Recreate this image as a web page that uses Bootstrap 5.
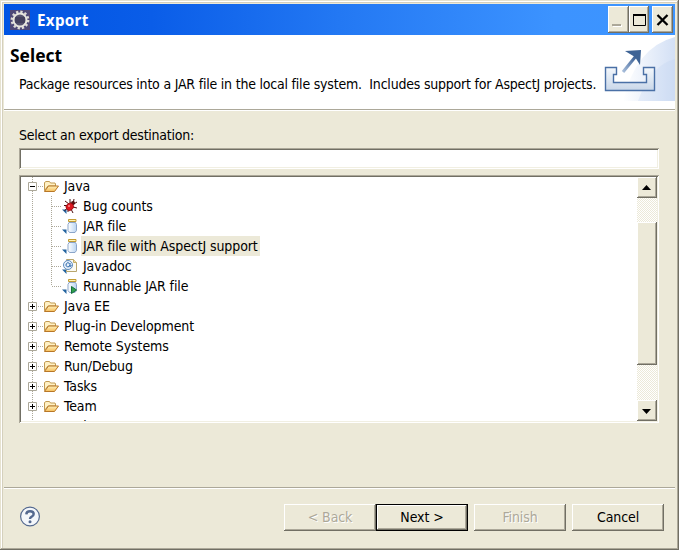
<!DOCTYPE html>
<html lang="en">
<head>
<meta charset="utf-8">
<meta name="viewport" content="width=device-width, initial-scale=1">
<title>Export</title>
<link href="https://cdn.jsdelivr.net/npm/bootstrap@5.3.0/dist/css/bootstrap.min.css" rel="stylesheet">
<style>
:root{--face:#ece9d8;--sh:#aca899;--dk:#716f64}
body{font-family:"DejaVu Sans Condensed","DejaVu Sans","Noto Sans",sans-serif;font-stretch:condensed;font-size:14px;line-height:20px;color:#000;background:var(--face);letter-spacing:-.1px;overflow:hidden}
svg{display:block;flex:none}
.window{width:679px;height:550px;background:var(--face);padding:4px;box-shadow:inset -1px -1px var(--dk),inset 1px 1px #e6e2cf,inset -2px -2px var(--sh),inset 2px 2px #fff,inset 3px 3px #d5d0bd}
.titlebar{height:31px;background:linear-gradient(90deg,#0054e3,#0a5de8 22%,#2378f3 50%,#3c93ff 82%,#3d95ff);padding:0 2px 0 6px}
.title-text{color:#fff;font-family:"Noto Sans",sans-serif;font-weight:700;font-size:15.2px;letter-spacing:.3px;margin-left:7px}
.raised{background:var(--face);box-shadow:inset -1px -1px var(--dk),inset 1px 1px #fff,inset -2px -2px var(--sh)}
.capbtn{width:21px;height:27px;border:0;padding:0}
.capbtn.maxi{width:20px}
.capbtn.closer{margin-left:3px}
.banner{height:74px;background:#fff;padding-left:6px}
.banner h1{font-family:"Noto Sans",sans-serif;font-weight:700;font-size:17.4px;line-height:22px;letter-spacing:0;margin:9px 0 0}
.banner-art{width:79px;height:66px}
.desc{margin:8px 0 0 9px;white-space:pre;letter-spacing:-.21px}
.rule{height:2px;background:#fff;border-top:1px solid var(--sh);flex:none}
.sunken{background:#fff;border:0;border-radius:0;box-shadow:inset 1px 1px var(--sh),inset -1px -1px #fff,inset 2px 2px var(--dk),inset -2px -2px #f1efe2}
.pane{padding:14px 0 0 15px;height:376px}
.pane label{letter-spacing:-.25px}
.filter{height:21px;width:640px;margin-top:3px;padding:2px 4px;outline:0}
.tree{height:248px;width:640px;margin-top:6px;padding:2px}
.rows{overflow:hidden;padding-left:7px;background:repeating-linear-gradient(180deg,#aca899 0 1px,transparent 1px 2px) 11px 0/1px 100% no-repeat}
.rows ul{list-style:none;margin:0;padding:0}
.rows .root{margin-top:-1px}
.node{height:20px}
.rows .kids{margin-left:23px;background:repeating-linear-gradient(180deg,#aca899 0 1px,transparent 1px 2px) 0 0/1px 90px no-repeat}
.hdots{height:1px;width:6px;flex:none;background:repeating-linear-gradient(90deg,transparent 0 1px,#aca899 1px 2px)}
.kids .hdots{width:11px}
.lbl{padding:0 2px;margin-left:3px;white-space:pre}
.picked{background:var(--face)}
.track{width:20px;background:conic-gradient(#fff 25%,#ece9d8 0 50%,#fff 0 75%,#ece9d8 0) 0 0/2px 2px}
.arrow{height:21px;border:0;padding:0}
.thumb{height:143px;margin-top:24px}
.footer-bar{padding:15px 11px 0 15px}
.help{margin-top:2px}
.wbtn{width:92px;height:27px;border:0;padding:0;line-height:25px;color:#000;letter-spacing:-.1px}
.wbtn.off{color:#aca899;text-shadow:1px 1px #fff}
.wbtn.apart{margin-left:6px}
.dflt{box-shadow:inset 0 0 0 1px #000,inset -2px -2px var(--dk),inset 2px 2px #fff,inset -3px -3px var(--sh)}
</style>
</head>
<body>
<svg width="0" height="0" class="position-absolute">
<defs>
<linearGradient id="fg" x2="0" y2="1"><stop stop-color="#fff2bd"/><stop offset="1" stop-color="#f5bd58"/></linearGradient>
<linearGradient id="jg" x2="1"><stop stop-color="#fff"/><stop offset="1" stop-color="#b9d4f2"/></linearGradient>
<symbol id="folder" viewBox="0 0 16 16"><path d="M1.500 12.500V4.500L3 3.500h3.500l1 1.500h4.500l.5 1v2H5z" fill="#fff1c4" stroke="#c19a52"/><path d="M1.500 13.500l4-5.500h10L11.500 13.500z" fill="url(#fg)" stroke="#b87727" stroke-linejoin="round"/></symbol>
<symbol id="corner" viewBox="0 0 16 16"><path d="M0 11.500h4.500V16z" fill="#23639f"/></symbol>
<symbol id="jar" viewBox="0 0 16 16"><use href="#corner"/><path d="M7 4.500h6.500l1 2v6l-1.500 2H7.500L6 12.500v-6z" fill="url(#jg)" stroke="#8ba5c9"/><path d="M6.500 1.500h7.500v2H6.500z" fill="#fff3b8" stroke="#c39d33"/></symbol>
<symbol id="bug" viewBox="0 0 16 16"><use href="#corner"/><path d="M3 3l4 3M2 7.500h4M2.500 12.500l4-3M8 1v4l3 1 1-5M10 7l5-3M11 9l4 1M9 11l2 4M6 11v3" fill="none" stroke="#4b0d0d"/><circle cx="11" cy="5" r="2" fill="#571010"/><ellipse cx="7.800" cy="8.800" rx="3.900" ry="3.500" transform="rotate(-40 7.800 8.800)" fill="#dc1820" stroke="#93090f" stroke-width=".7"/><circle cx="7" cy="8" r="1" fill="#ff8d8d"/></symbol>
<symbol id="doc" viewBox="0 0 16 16"><use href="#corner"/><path d="M4.500 1.500h7l3 3v9h-10z" fill="#fbfaf2" stroke="#b8a56c"/><path d="M11.500 1.500v3h3" fill="#f3dfa3" stroke="#c4ad68"/><circle cx="6" cy="7" r="4.500" fill="#e5effa" stroke="#5d8cc0"/><path d="M8 5v3q1 1 1.500-.5M8 7a2 2 0 1 1-.5-1.500" fill="none" stroke="#2d68aa"/></symbol>
<symbol id="twig" viewBox="0 0 9 9"><path d="M.5.5h8v8h-8z" fill="#fff" stroke="#aca899"/><path d="M2 4.500h5" stroke="#000"/></symbol>
<symbol id="twigplus" viewBox="0 0 9 9"><use href="#twig"/><path d="M4.500 2v5" stroke="#000"/></symbol>
</defs>
</svg>
<main class="window d-flex flex-column">
 <header class="titlebar d-flex align-items-center">
  <svg width="20" height="20" viewBox="0 0 20 20"><path fill="#4d4778" d="M0 0h20v20H0z"/><circle cx="10" cy="10" r="8.200" fill="none" stroke="#dedbd6" stroke-width="2.400" stroke-dasharray="2.300 2"/><circle cx="10" cy="10" r="6.500" fill="#55516e" stroke="#e8e5df" stroke-width="2"/><path d="M5 8h10M5 10h10M5 12h10" stroke="#34304e"/></svg>
  <span class="title-text">Export</span>
  <div class="d-flex ms-auto">
   <button class="capbtn raised" aria-label="Minimize"><svg width="21" height="27"><path d="M5 20h9" stroke="#fff" stroke-width="2"/><path d="M4 19h9" stroke="#aca899" stroke-width="2"/></svg></button>
   <button class="capbtn maxi raised" aria-label="Maximize"><svg width="20" height="27"><path d="M4.500 9v10.500h12V9" fill="none" stroke="#000"/><path d="M4 9h13" stroke="#000" stroke-width="2"/></svg></button>
   <button class="capbtn closer raised" aria-label="Close"><svg width="21" height="27"><path d="M5.500 9l10 10M15.500 9l-10 10" stroke="#000" stroke-width="2.300"/></svg></button>
  </div>
 </header>
 <section class="banner d-flex justify-content-between">
  <div><h1>Select</h1><p class="desc">Package resources into a JAR file in the local file system.  Includes support for AspectJ projects.</p></div>
  <svg class="banner-art" viewBox="0 0 79 66"><defs><linearGradient id="bg" x2="1"><stop stop-color="#fff"/><stop offset="1" stop-color="#d3e0f5"/></linearGradient><linearGradient id="tg" x2="0" y2="1"><stop stop-color="#f4f8fc"/><stop offset="1" stop-color="#c9d7e9"/></linearGradient><linearGradient id="ag" x1="1" y1="0" x2="0" y2="1"><stop stop-color="#355b91"/><stop offset="1" stop-color="#a9bfdc"/></linearGradient></defs><path d="M79 2Q40 12 27 66H79z" fill="url(#bg)"/><path d="M79 24Q55 30 42 66H79z" fill="#bdd0ee" opacity=".25"/><path d="M9.500 32.500h11v7h-3v8h33v-8h-3v-7h11v23h-49z" fill="url(#tg)" stroke="#4a70a6" stroke-width="1.400"/><path d="M27 37L40 21" stroke="url(#ag)" stroke-width="3"/><path d="M29 16l16-1-1 15-5-8z" fill="#3e6395"/></svg>
 </section>
 <div class="rule"></div>
 <section class="pane flex-shrink-0">
  <label for="f" class="d-block">Select an export destination:</label>
  <input id="f" class="filter sunken d-block">
  <div class="tree sunken d-flex">
   <div class="rows flex-grow-1">
    <ul class="root">
     <li><div class="node d-flex align-items-center"><svg width="9" height="9"><use href="#twig"/></svg><i class="hdots"></i><svg width="16" height="16"><use href="#folder"/></svg><span class="lbl">Java</span></div>
      <ul class="kids">
       <li class="node d-flex align-items-center"><i class="hdots"></i><svg width="16" height="16"><use href="#bug"/></svg><span class="lbl">Bug counts</span></li>
       <li class="node d-flex align-items-center"><i class="hdots"></i><svg width="16" height="16"><use href="#jar"/></svg><span class="lbl">JAR file</span></li>
       <li class="node d-flex align-items-center"><i class="hdots"></i><svg width="16" height="16"><use href="#jar"/></svg><span class="lbl picked">JAR file with AspectJ support</span></li>
       <li class="node d-flex align-items-center"><i class="hdots"></i><svg width="16" height="16"><use href="#doc"/></svg><span class="lbl">Javadoc</span></li>
       <li class="node d-flex align-items-center"><i class="hdots"></i><svg width="16" height="16"><use href="#jar"/><path d="M9.500 8.500l5 3.500-5 3.500z" fill="#2fa04f" stroke="#16703a"/></svg><span class="lbl">Runnable JAR file</span></li>
      </ul></li>
     <li><div class="node d-flex align-items-center"><svg width="9" height="9"><use href="#twigplus"/></svg><i class="hdots"></i><svg width="16" height="16"><use href="#folder"/></svg><span class="lbl">Java EE</span></div></li>
     <li><div class="node d-flex align-items-center"><svg width="9" height="9"><use href="#twigplus"/></svg><i class="hdots"></i><svg width="16" height="16"><use href="#folder"/></svg><span class="lbl">Plug-in Development</span></div></li>
     <li><div class="node d-flex align-items-center"><svg width="9" height="9"><use href="#twigplus"/></svg><i class="hdots"></i><svg width="16" height="16"><use href="#folder"/></svg><span class="lbl">Remote Systems</span></div></li>
     <li><div class="node d-flex align-items-center"><svg width="9" height="9"><use href="#twigplus"/></svg><i class="hdots"></i><svg width="16" height="16"><use href="#folder"/></svg><span class="lbl">Run/Debug</span></div></li>
     <li><div class="node d-flex align-items-center"><svg width="9" height="9"><use href="#twigplus"/></svg><i class="hdots"></i><svg width="16" height="16"><use href="#folder"/></svg><span class="lbl">Tasks</span></div></li>
     <li><div class="node d-flex align-items-center"><svg width="9" height="9"><use href="#twigplus"/></svg><i class="hdots"></i><svg width="16" height="16"><use href="#folder"/></svg><span class="lbl">Team</span></div></li>
     <li><div class="node d-flex align-items-center"><svg width="9" height="9"><use href="#twigplus"/></svg><i class="hdots"></i><svg width="16" height="16"><use href="#folder"/></svg><span class="lbl">Web</span></div></li>
    </ul>
   </div>
   <div class="track d-flex flex-column">
    <button class="arrow raised" aria-label="Scroll up"><svg width="20" height="21"><path d="M5 13l4.500-5L14 13z"/></svg></button>
    <div class="thumb raised"></div>
    <button class="arrow raised mt-auto" aria-label="Scroll down"><svg width="20" height="21"><path d="M5 9l4.500 5L14 9z"/></svg></button>
   </div>
  </div>
 </section>
 <div class="rule"></div>
 <footer class="footer-bar d-flex">
  <svg width="22" height="22" viewBox="0 0 22 22" class="help"><circle cx="11" cy="10.500" r="9.400" fill="#f4f7fb" stroke="#54698f" stroke-width="1.200"/><path d="M7.300 8.300Q7.500 5.300 11 5.300q3.700 0 3.700 2.800 0 1.600-2 2.600-1.700.8-1.700 2.300" fill="none" stroke="#54698f" stroke-width="2.400"/><circle cx="11" cy="15.800" r="1.500" fill="#54698f"/></svg>
  <div class="d-flex ms-auto">
   <button class="wbtn raised off">&lt; Back</button>
   <button class="wbtn raised dflt">Next &gt;</button>
   <button class="wbtn raised off apart">Finish</button>
   <button class="wbtn raised apart">Cancel</button>
  </div>
 </footer>
</main>
</body>
</html>
